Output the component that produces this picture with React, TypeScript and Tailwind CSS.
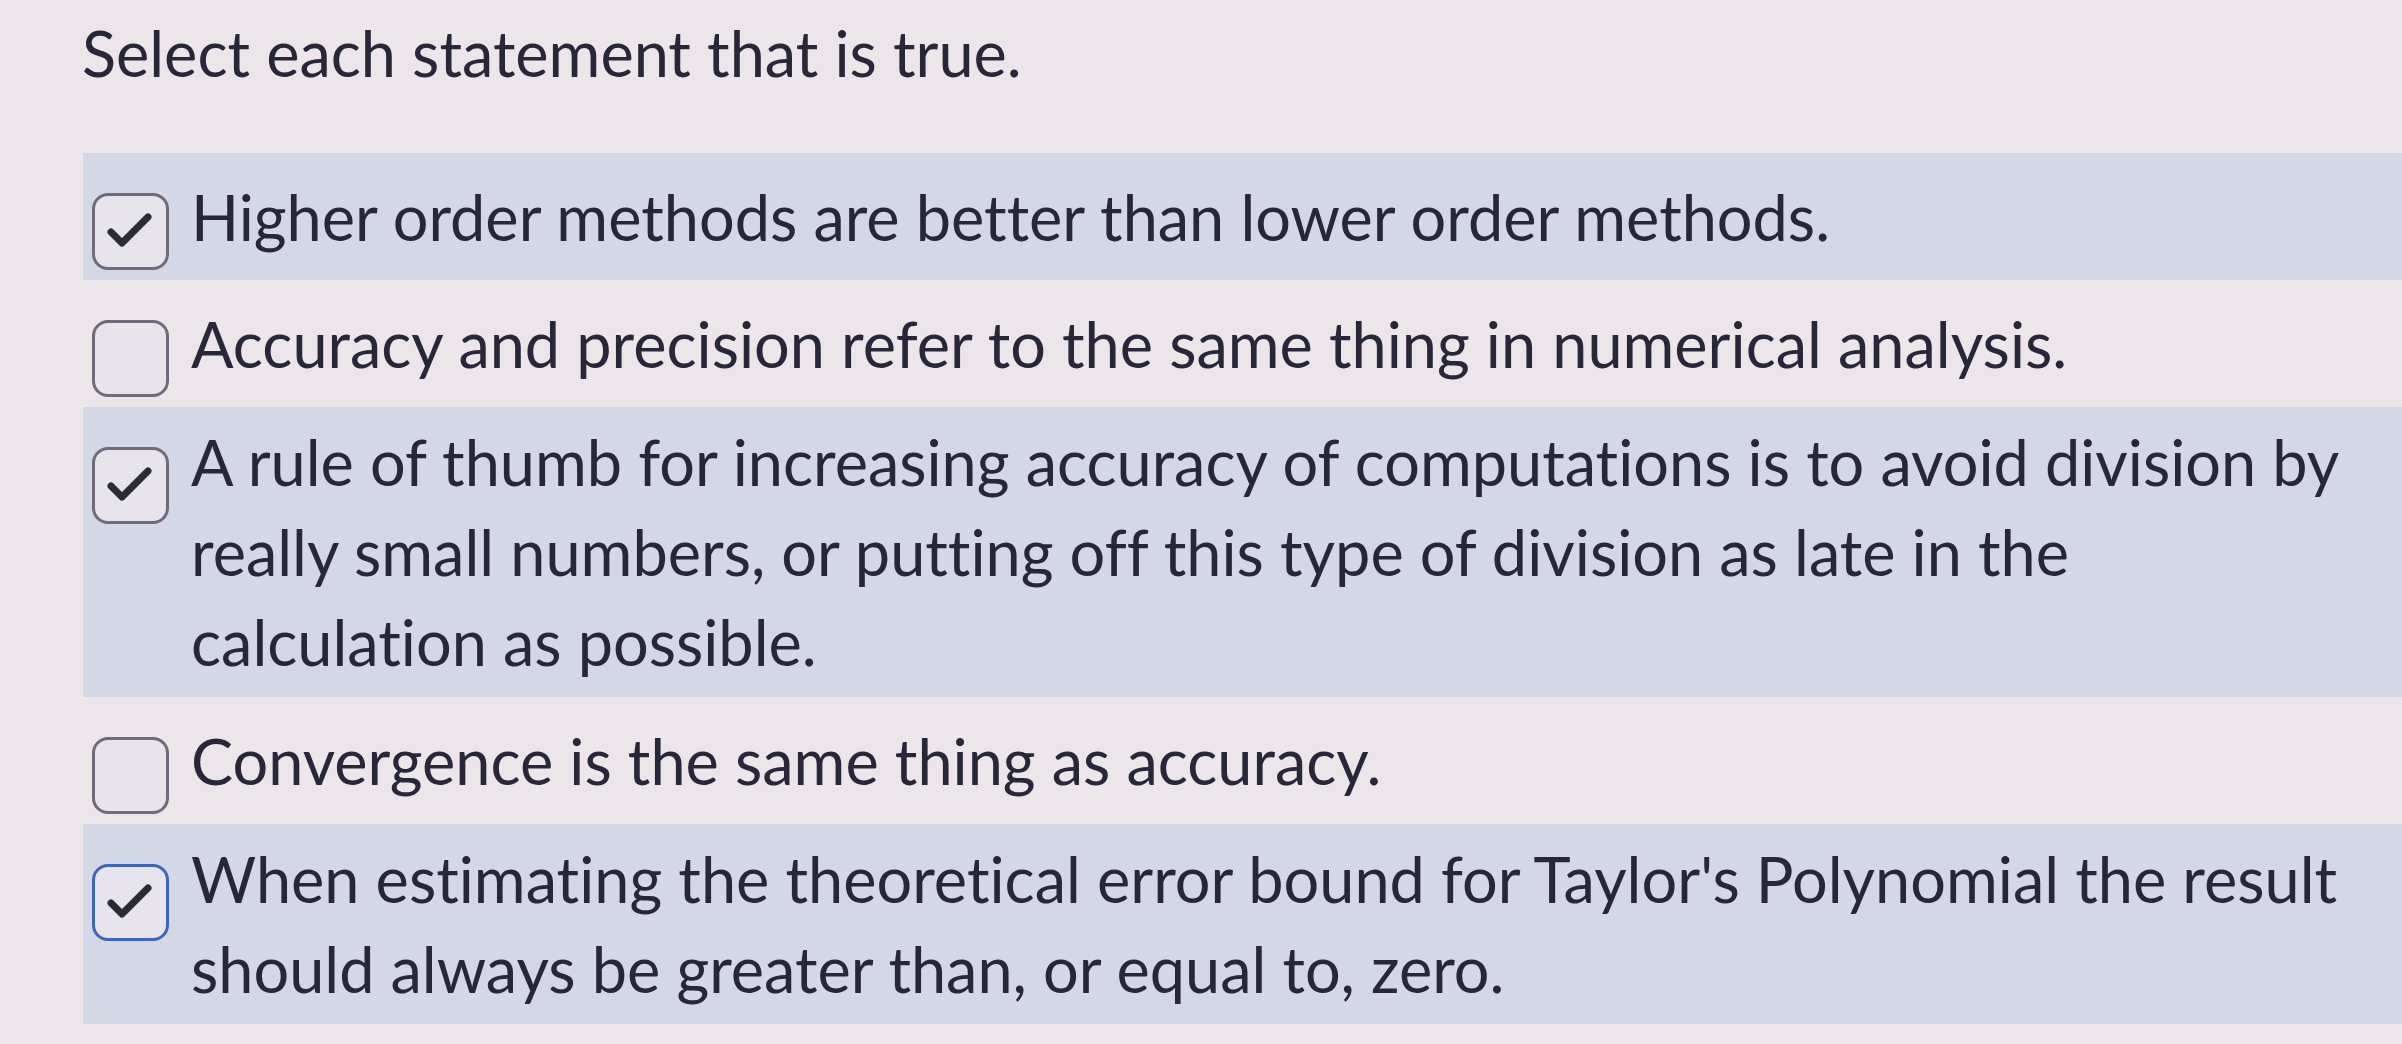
import React from "react";

type Choice = {
    id: string;
    text: string;
    checked: boolean;
    focused?: boolean;
};

const choices: Choice[] = [
    { id: "c1", text: "Higher order methods are better than lower order methods.", checked: true },
    { id: "c2", text: "Accuracy and precision refer to the same thing in numerical analysis.", checked: false },
    {
        id: "c3",
        text: "A rule of thumb for increasing accuracy of computations is to avoid division by really small numbers, or putting off this type of division as late in the calculation as possible.",
        checked: true,
    },
    { id: "c4", text: "Convergence is the same thing as accuracy.", checked: false },
    {
        id: "c5",
        text: "When estimating the theoretical error bound for Taylor's Polynomial the result should always be greater than, or equal to, zero.",
        checked: true,
        focused: true,
    },
];

const CheckBox: React.FC<{ checked: boolean; focused?: boolean }> = ({ checked, focused }) => (
    <span
        className={`relative mt-[30px] ml-[9px] block h-[77px] w-[77px] shrink-0 rounded-[16px] bg-[#e7e4ec] ${
            focused ? "border-[3px] border-[#3d66b8]" : "border-[3px] border-[#6f6b7a]"
        }`}
    >
        {checked && (
            <svg viewBox="0 0 77 77" className="absolute -inset-[3px] h-[77px] w-[77px]" fill="none">
                <path
                    d="M19 39 L30 50 L56 24"
                    stroke="#2c2b31"
                    strokeWidth="7"
                    strokeLinecap="round"
                    strokeLinejoin="round"
                />
            </svg>
        )}
    </span>
);

export default function App() {
    return (
        <div className="min-h-[1044px] w-full overflow-hidden bg-[#ece6eb] font-['Lato',sans-serif] text-[#28273a] [font-variant-ligatures:none]">
            <h1 className="pl-[82px] pt-[8px] text-[63px] font-normal leading-[90px]">
                Select each statement that is true.
            </h1>

            <ul className="mt-[55px] pl-[83px]">
                {choices.map((c, i) => (
                    <li
                        key={c.id}
                        className={`flex items-start gap-[22px] py-[10px] ${i % 2 === 0 ? "bg-[#d4d7e5]" : ""}`}
                    >
                        <CheckBox checked={c.checked} focused={c.focused} />
                        <label className="self-center pr-[44px] text-[63px] leading-[90px]">{c.text}</label>
                    </li>
                ))}
            </ul>
        </div>
    );
}
